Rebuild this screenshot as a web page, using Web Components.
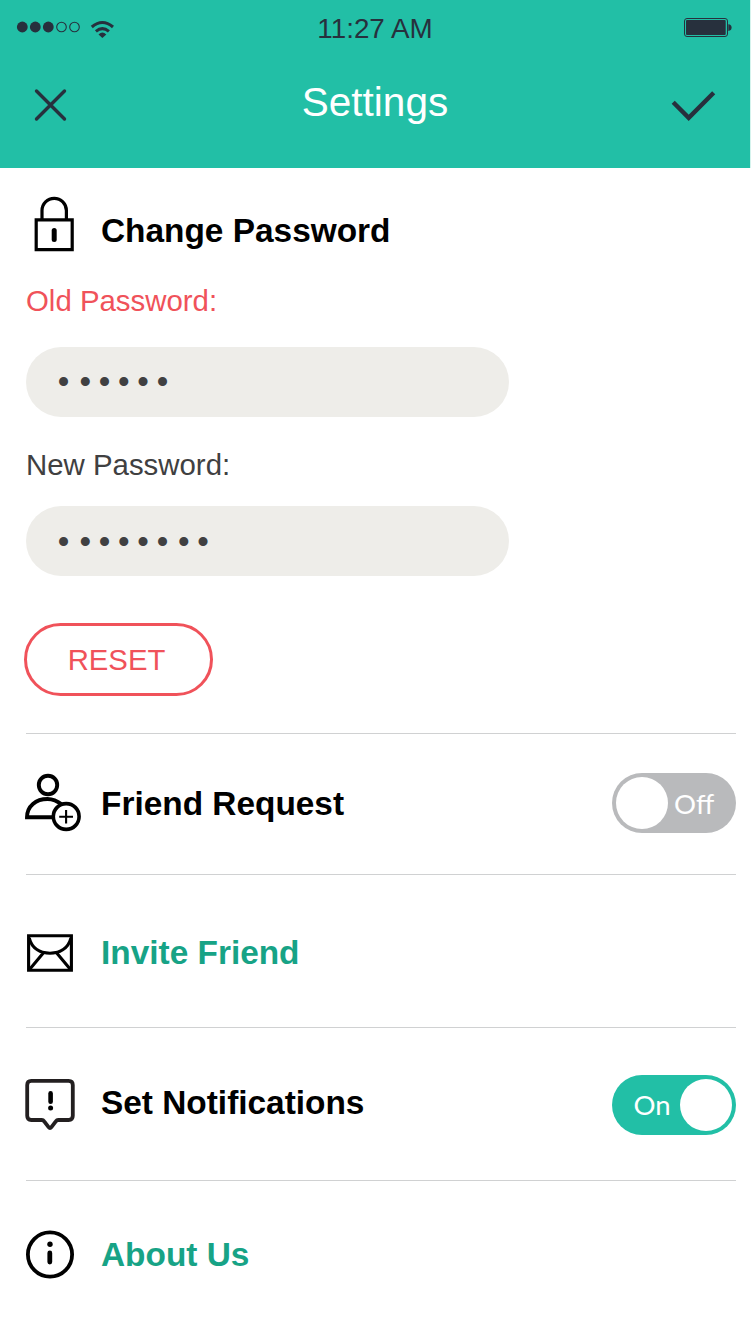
<!DOCTYPE html>
<html lang="en">
<head>
<meta charset="utf-8">
<title>Settings</title>
<style>
html,body{margin:0;background:#fff}
body{font-family:"Liberation Sans",Arial,sans-serif;width:751px;height:1334px;overflow:hidden}
</style>
</head>
<body>
<settings-page></settings-page>
<script>
const define = (name, html, setup) => customElements.define(name, class extends HTMLElement {
  constructor() {
    super();
    const t = document.createElement('template');
    t.innerHTML = html;
    this.attachShadow({ mode: 'open' }).append(t.content.cloneNode(true));
  }
  connectedCallback() { if (setup) setup(this, this.shadowRoot); }
});

define('status-bar', `<style>
:host{display:grid;grid-template-columns:1fr auto 1fr;height:56px;color:#27303d;font-size:27.8px;line-height:57px}
svg{display:block}
.time{white-space:nowrap}
.power{justify-self:end}
</style>
<svg width="130" height="56" viewBox="0 0 130 56"><g fill="#27303d"><circle cx="22.3" cy="27" r="5.4"/><circle cx="35.3" cy="27" r="5.4"/><circle cx="48.3" cy="27" r="5.4"/></g>
<g fill="none" stroke="#27303d"><circle cx="61.5" cy="27" r="4.8" stroke-width="1.1"/><circle cx="74.5" cy="27" r="4.8" stroke-width="1.1"/><path d="M91.8 27Q102.4 18 113 27" stroke-width="3.1"/><path d="M95.9 31.4Q102.4 25.8 108.9 31.4" stroke-width="3"/></g><path d="M98.5 34.4Q102.4 30.6 106.3 34.4L102.4 38Z" fill="#27303d"/></svg>
<span class="time">11:27 AM</span>
<svg class="power" width="70" height="56" viewBox="0 0 70 56"><rect x="4.5" y="18.5" width="43" height="18" rx="2.5" fill="none" stroke="#27303d"/><rect x="6" y="20" width="39.7" height="15" rx="1" fill="#27303d"/><path d="M48.3 24.2Q51.6 24.5 51.6 27.6T48.3 31Z" fill="#27303d"/></svg>`);

define('nav-bar', `<style>
:host{display:grid;grid-template-columns:1fr auto 1fr;height:112px;color:#fff}
h1{margin:0;font-size:40.5px;font-weight:400;line-height:92px}
svg{display:block}.ok{justify-self:end}
</style>
<svg width="90" height="112" viewBox="0 56 90 112"><path d="M36.5 91L64.5 119M64.5 91L36.5 119" fill="none" stroke="#27303d" stroke-width="3.4" stroke-linecap="round"/></svg>
<h1><slot></slot></h1>
<svg class="ok" width="90" height="112" viewBox="660 56 90 112"><path d="M673.2 102.2L688.7 117.8L713.7 92.8" fill="none" stroke="#27303d" stroke-width="4.4"/></svg>`);

const ICONS = {
  lock: `<g fill="none" stroke="#000" stroke-width="3.2"><path d="M36.2 219.8H72.2V249.6H36.2ZM42 219V210.5a12.2 12.2 0 0 1 24.4 0V219"/><path d="M54.2 230.4V239.6" stroke-width="5" stroke-linecap="round"/></g>`,
  friend: `<g fill="none" stroke="#000" stroke-width="3.9"><circle cx="48" cy="785" r="9.2"/><path d="M52 817.3H27C27 806 36 799 47.5 799C54 799 58 801.5 62 804.6"/><circle cx="66.2" cy="816.5" r="12.9" fill="#fff" stroke-width="3.6"/><path d="M59.2 816.8H73M66.1 810V823.4" stroke-width="2.1"/></g>`,
  mail: `<g fill="none" stroke="#000" stroke-width="3.1"><path d="M28.6 935.7H71.4V970.3H28.6Z"/><path d="M29.2 938C32 949 41 953.2 50 953.2S68 949 71 938M43.7 952.5L29.5 969.5M56.3 952.5L70.5 969.5"/></g>`,
  notice: `<path d="M31.3 1080.8H68.6Q72.8 1080.8 72.8 1085V1115.8Q72.8 1120 68.6 1120H58.2Q56.8 1120 55.8 1121.4L51.4 1127.2Q50 1129 48.6 1127.2L44.2 1121.4Q43.2 1120 41.8 1120H31.3Q27.2 1120 27.2 1115.8V1085Q27.2 1080.8 31.3 1080.8Z" fill="none" stroke="#231f20" stroke-width="3.8"/><path d="M50.6 1093.4V1101.7" stroke="#000" stroke-width="4.6" stroke-linecap="round"/><circle cx="50.6" cy="1108" r="2.5"/>`,
  info: `<circle cx="50" cy="1254.5" r="22.1" fill="none" stroke="#000" stroke-width="3.8"/><circle cx="50" cy="1244.3" r="2.7"/><path d="M49.8 1253V1262" stroke="#000" stroke-width="4.8" stroke-linecap="round"/>`
};
const TOPS = { lock: 192, friend: 770, mail: 920, notice: 1072, info: 1222 };

define('line-icon', `<style>:host{display:block;width:62px;height:64px}svg{display:block}</style><svg width="62" height="64"></svg>`, (el, root) => {
  const name = el.getAttribute('name'), svg = root.querySelector('svg');
  svg.setAttribute('viewBox', `22 ${TOPS[name]} 62 64`);
  svg.innerHTML = ICONS[name];
});

define('setting-row', `<style>
:host{display:grid;grid-template-columns:79px 1fr auto;align-items:start;color:#000}
:host([link]){color:#17a386}
::slotted(line-icon){margin:var(--icon-top,0) 0 0 -4px}
h2{margin:var(--text-top,0) 0 0 -4px;font-size:33.4px;line-height:40px;font-weight:700;white-space:nowrap}
::slotted(toggle-switch){margin-top:var(--switch-top,0)}
</style><slot name="icon"></slot><h2><slot></slot></h2><slot name="control"></slot>`);

define('toggle-switch', `<style>
:host{display:flex;box-sizing:border-box;width:124.5px;height:60px;border-radius:30px;padding:4px;align-items:center;background:#b9babc;color:#fff;font:27.5px/52px Lato,sans-serif}
i{display:block;width:52px;height:52px;border-radius:50%;background:#fff;flex:none}
span{display:block;padding:1px 0 0 6.5px}
:host([on]){background:#22bfa6;flex-direction:row-reverse}
:host([on]) span{padding:0 9.5px 0 0}
</style><i></i><span><slot></slot></span>`);

define('password-field', `<style>
:host{display:block;color:#404041}
:host([alert]) label{color:#f0525a}
label{display:block;font-size:29.4px;line-height:36px;white-space:nowrap}
.box{box-sizing:border-box;width:483px;height:70px;border-radius:35px;background:#eeede9;margin-top:var(--gap);padding:var(--dots-top,0) 0 0 31.8px;font-size:33px;line-height:70px;color:#404041;display:flex}
.dots span{letter-spacing:7.75px}
.dots span:nth-child(1){margin-right:2.3px}
.dots span:nth-child(6){margin-right:2px}
</style><label><slot></slot></label><div class="box"><div class="dots"></div></div>`, (el, root) => {
  root.querySelector('.dots').innerHTML = '<span>•</span>'.repeat(+el.getAttribute('length'));
});

define('pill-button', `<style>
:host{display:block}
button{display:block;box-sizing:border-box;width:189px;height:73px;border:3px solid #f0525a;border-radius:36.5px;background:#fff;color:#f0525a;font:29.3px/67px "Liberation Sans",Arial,sans-serif;padding:0 4px 1px 0;text-align:center}
</style><button><slot></slot></button>`);

define('settings-page', `<style>
:host{display:block;width:751px;height:1334px}
header{width:750px;height:168px;background:#22bfa6;border-right:1px solid #d5f3ed}
main{padding:0 15px 0 26px}
section{display:flow-root;box-sizing:border-box;border-bottom:1px solid #d0d1d2}
section:last-child{border:0}
.pw{height:566px}.fr{height:141px}.inv,.not,.ab{height:153px}
.pw setting-row{--icon-top:24px;--text-top:43px;height:115px}
.fr setting-row{--icon-top:36px;--text-top:50px;--switch-top:39px}
.inv setting-row{--icon-top:45px;--text-top:58px}
.not setting-row{--icon-top:44px;--text-top:55px;--switch-top:47px}
.ab setting-row{--icon-top:41px;--text-top:54px}
.old{--gap:28px}.new{--gap:23px;--dots-top:1px;margin-top:30px}
pill-button{margin:47px 0 0 -2px}
</style>
<header><status-bar></status-bar><nav-bar>Settings</nav-bar></header>
<main>
<section class="pw"><setting-row><line-icon slot="icon" name="lock"></line-icon>Change Password</setting-row>
<password-field class="old" alert length="6">Old Password:</password-field>
<password-field class="new" length="8">New Password:</password-field>
<pill-button>RESET</pill-button></section>
<section class="fr"><setting-row><line-icon slot="icon" name="friend"></line-icon>Friend Request<toggle-switch slot="control">Off</toggle-switch></setting-row></section>
<section class="inv"><setting-row link><line-icon slot="icon" name="mail"></line-icon>Invite Friend</setting-row></section>
<section class="not"><setting-row><line-icon slot="icon" name="notice"></line-icon>Set Notifications<toggle-switch slot="control" on>On</toggle-switch></setting-row></section>
<section class="ab"><setting-row link><line-icon slot="icon" name="info"></line-icon>About Us</setting-row></section>
</main>`);
</script>
</body>
</html>
